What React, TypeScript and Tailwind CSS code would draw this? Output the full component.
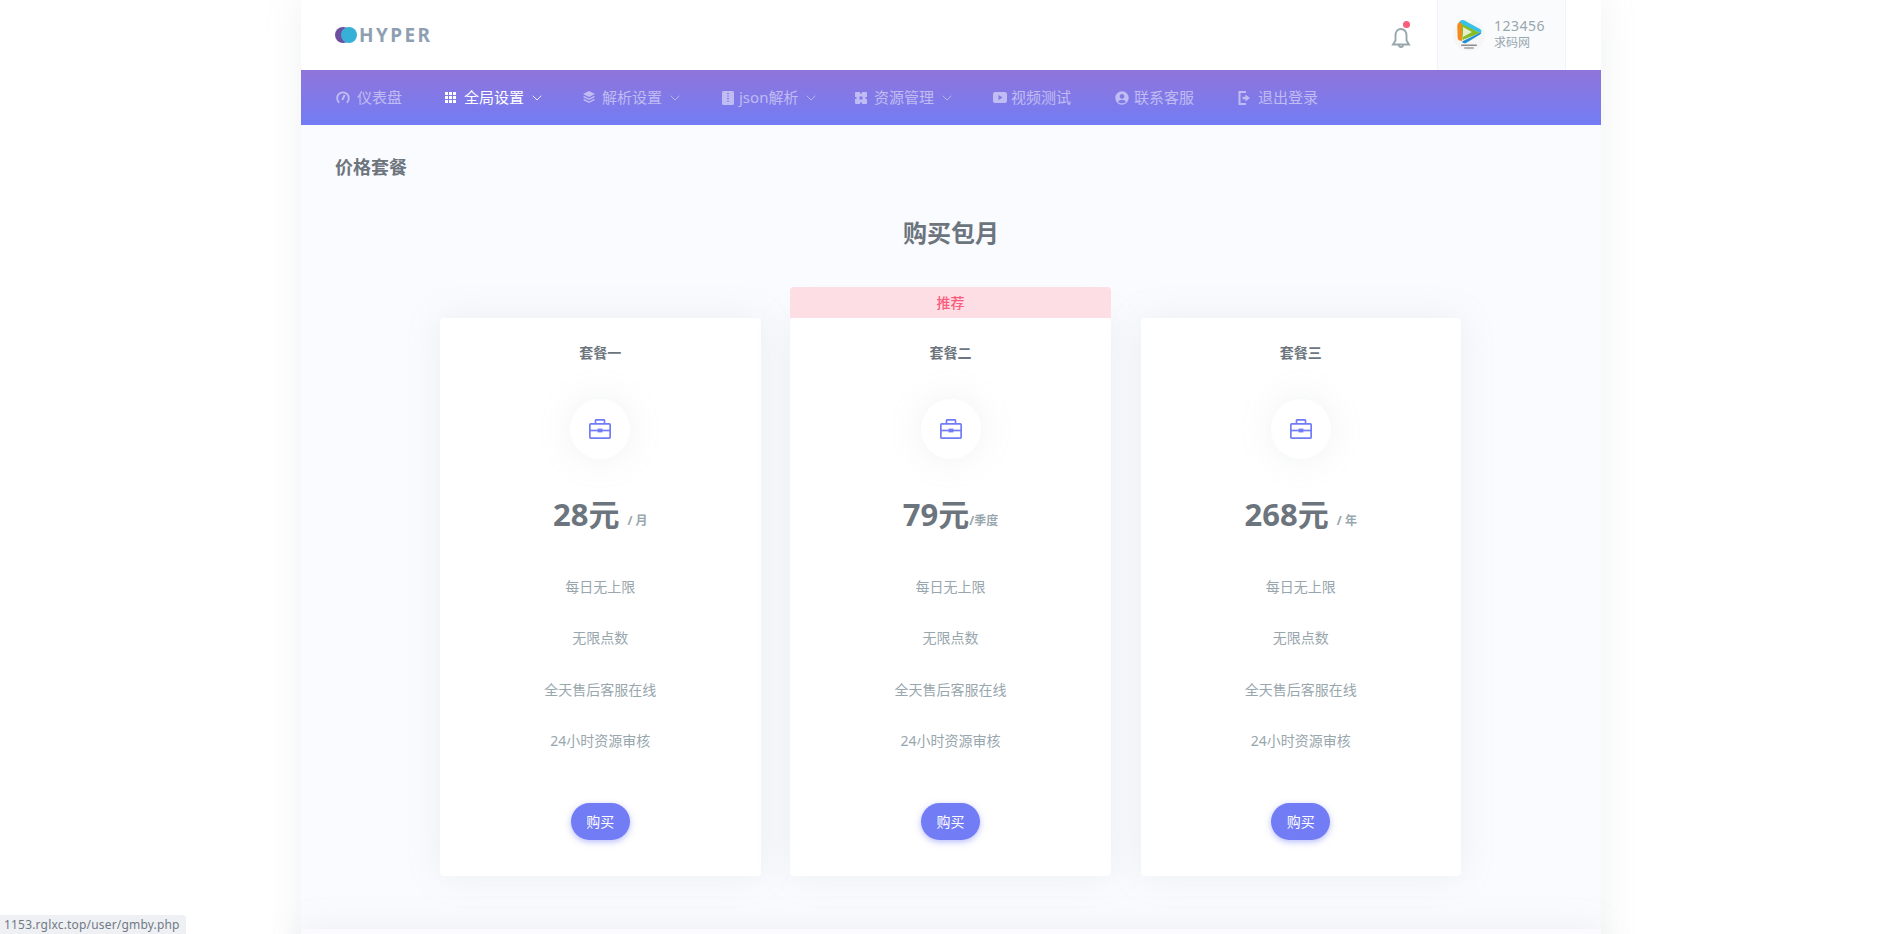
import { ChevronDown } from 'lucide-react';
import type { ReactNode } from 'react';
import { MdAccountCircle } from 'react-icons/md';

interface NavItem {
  label: string;
  icon: ReactNode;
  width: string;
  caret?: boolean;
  active?: boolean;
}

function GaugeIcon() {
  return (
    <svg width="14" height="14" viewBox="0 0 24 24" fill="none" stroke="currentColor" className="ml-[1px]">
      <path d="M5.5 20a10 10 0 1 1 13 0" strokeWidth="3.2" />
      <path d="M10.5 15.5L15 7" strokeWidth="3.4" />
    </svg>
  );
}

function GridIcon() {
  return (
    <svg width="11" height="11" viewBox="0 0 11 11" fill="currentColor" className="ml-[3px]">
      {[0, 4, 8].flatMap((y) => [0, 4, 8].map((x) => <rect key={`${x}-${y}`} x={x} y={y} width="3" height="3" />))}
    </svg>
  );
}

function LayersIcon() {
  return (
    <svg width="12" height="13" viewBox="0 0 12 13" fill="currentColor" className="ml-[3px]">
      <path d="M6 0l6 3-6 3-6-3z" />
      <path d="M1.2 5L6 7.4 10.8 5 12 6 6 9 0 6z" />
      <path d="M1.2 8L6 10.4 10.8 8 12 9 6 12 0 9z" />
    </svg>
  );
}

function ZipIcon() {
  return (
    <svg width="12" height="14" viewBox="0 0 12 14" className="ml-[5px]">
      <rect width="12" height="14" rx="1.5" fill="currentColor" />
      <path d="M5 2h2v1H5zM5 4.500h2v1H5zM5 7h2v1H5zM5 9.500h2v1H5z" fill="#7f78e4" />
    </svg>
  );
}

function PuzzleIcon() {
  return (
    <svg width="12" height="12" viewBox="0 0 12 12" fill="currentColor" className="ml-[3px]">
      <path
        fillRule="evenodd"
        d="M1 0h4v1.500h2V0h4a1 1 0 0 1 1 1v4h-1.500v2H12v4a1 1 0 0 1-1 1H7v-1.500H5V12H1a1 1 0 0 1-1-1V7h1.500V5H0V1a1 1 0 0 1 1-1zM4.500 4.500v3h3v-3z"
      />
    </svg>
  );
}

function VideoIcon() {
  return (
    <svg width="14" height="11" viewBox="0 0 14 11" fill="currentColor" className="ml-[4px]">
      <path fillRule="evenodd" d="M2 0h10a2 2 0 0 1 2 2v7a2 2 0 0 1-2 2H2a2 2 0 0 1-2-2V2a2 2 0 0 1 2-2zM5.500 3v5l4-2.500z" />
    </svg>
  );
}

function LogoutIcon() {
  return (
    <svg width="12" height="14" viewBox="0 0 12 14" className="ml-[2px]">
      <path d="M8 1H1.500v12H8" fill="none" stroke="currentColor" strokeWidth="2" />
      <path d="M4.500 5.800h3V3.500L12 7l-4.500 3.500V8.200h-3z" fill="currentColor" />
    </svg>
  );
}

const navItems: NavItem[] = [
  { label: '仪表盘', icon: <GaugeIcon />, width: 'w-[107px]' },
  { label: '全局设置', icon: <GridIcon />, width: 'w-[138px]', caret: true, active: true },
  { label: '解析设置', icon: <LayersIcon />, width: 'w-[137px]', caret: true },
  { label: 'json解析', icon: <ZipIcon />, width: 'w-[135px]', caret: true },
  { label: '资源管理', icon: <PuzzleIcon />, width: 'w-[137px]', caret: true },
  { label: '视频测试', icon: <VideoIcon />, width: 'w-[123px]' },
  { label: '联系客服', icon: <MdAccountCircle size={16} className="ml-[2px]" />, width: 'w-[124px]' },
  { label: '退出登录', icon: <LogoutIcon />, width: 'w-[90px]' },
];

const features = ['每日无上限', '无限点数', '全天售后客服在线', '24小时资源审核'];

const plans = [
  { name: '套餐一', price: '28元', unit: '/ 月' },
  { name: '套餐二', price: '79元', unit: '/季度', recommended: true },
  { name: '套餐三', price: '268元', unit: '/ 年' },
];

function Briefcase() {
  return (
    <svg width="22" height="20" viewBox="0 0 22 20" fill="none" stroke="#727cf5" strokeWidth="1.7">
      <rect x="0.850" y="4.850" width="20.300" height="14.300" rx="0.800" />
      <path d="M6.500 4.500V1.500a0.700 0.700 0 0 1 .7-.7h7.600a0.700 0.700 0 0 1 .7.7v3" />
      <path d="M1 11.500h20" />
      <rect x="9" y="10" width="4" height="3" fill="#727cf5" strokeWidth="0.800" />
    </svg>
  );
}

function Logo() {
  return (
    <div className="flex items-center gap-[2px]">
      <svg width="22" height="16" viewBox="0 0 22 16">
        <circle cx="8" cy="8" r="8" fill="#6e4f9f" />
        <circle cx="14" cy="8" r="8" fill="#36b0d6" />
      </svg>
      <span className="text-[19px] font-bold leading-none tracking-[2.400px] text-[#8f9fb2]">HYPER</span>
    </div>
  );
}

function Avatar() {
  return (
    <svg width="32" height="32" viewBox="0 0 32 32">
      <circle cx="16" cy="16" r="16" fill="#f6f6f6" />
      <path d="M6 3.500Q7 0 11 1.200L27 10Q30 12 27 14L22 12 8 5z" fill="#36c0ea" />
      <path d="M4.300 7Q4.500 3.500 7 3.200L9 5V22Q5 22 4.700 19z" fill="#f28a1c" />
      <path d="M8.500 4.800L23 12 27 14 9.500 21z" fill="#86bd24" />
      <path d="M9 22.500L27.500 13.500Q29.500 13 27 15.500L13 24Q10 25 9 22.500z" fill="#1f8fd8" />
      <path d="M10 8l9 5-9 5z" fill="#e6edd0" />
      <rect x="8" y="25.500" width="16" height="1.500" rx="0.700" fill="#8c8c8c" />
      <rect x="11" y="28" width="10" height="2" rx="1" fill="#b5b5b5" />
    </svg>
  );
}

function PlanCard({ name, price, unit, recommended }: { name: string; price: string; unit: string; recommended?: boolean }) {
  return (
    <div className="relative flex h-[558px] w-[320.5px] flex-col items-center rounded-[4px] bg-white shadow-[0_0_35px_0_rgba(154,161,171,0.15)]">
      {recommended && (
        <div className="absolute -top-[31px] left-0 right-0 flex h-[31px] items-center justify-center rounded-t-[4px] bg-[#fedee5] pb-[1px] text-[14px] font-medium text-[#fa5c7c]">
          推荐
        </div>
      )}
      <p className="mt-[24px] text-[14px] font-bold leading-[21px] text-[#6c757d]">{name}</p>
      <div className="mt-[36px] flex h-[60px] w-[60px] items-center justify-center rounded-full bg-white shadow-[0_0_35px_0_rgba(154,161,171,0.15)]">
        <Briefcase />
      </div>
      <div className="mt-[33px] flex h-[45px] items-center text-[#6c757d]">
        <span className="text-[31px] font-bold leading-[45px]">{price}</span>
        <span className={`mt-[13px] text-[12px] font-bold text-[#98a6ad] ${recommended ? '' : 'ml-[8px]'}`}>{unit}</span>
      </div>
      <ul className="mt-[24px] flex flex-col items-center">
        {features.map((f) => (
          <li key={f} className="h-[51.3px] text-[14px] leading-[51.3px] text-[#98a6ad]">
            {f}
          </li>
        ))}
      </ul>
      <button type="button" className="mt-[37px] h-[37px] w-[59px] rounded-full bg-[#727cf5] text-[14px] text-white shadow-[0_2px_6px_0_rgba(114,124,245,0.5)]">
        购买
      </button>
    </div>
  );
}

export default function App() {
  return (
    <div className="relative h-[934px] overflow-hidden bg-white font-['Noto_Sans','Noto_Sans_CJK_SC',sans-serif]">
      <div className="ml-[301px] w-[1300px] bg-[#fafbfe] shadow-[0_0_35px_0_rgba(154,161,171,0.15)]">
        <header className="flex h-[70px] items-center justify-between bg-white pl-[34px] pr-[35px]">
          <Logo />
          <div className="flex h-full items-center">
            <div className="relative mr-[26px] mt-[6px]">
              <svg width="20" height="21" viewBox="0 0 20 21" fill="none" stroke="#98a6ad" strokeWidth="1.900" className="block">
                <path d="M10 1C6.500 1 4.500 4 4.500 7.500v5L2 16.500h16l-2.500-4v-5C15.500 4 13.500 1 10 1z" />
                <path d="M8 17a2 2 0 0 0 4 0" />
              </svg>
              <span className="absolute -top-[6.500px] left-[12px] h-[7px] w-[7px] rounded-full bg-[#fa5c7c]" />
            </div>
            <div className="flex h-full w-[129px] items-center border-x border-[#f1f3fa] bg-[#fafbfd] pl-[15px]">
              <Avatar />
              <div className="ml-[9px]">
                <p className="-mt-[2px] mb-[1px] text-[14px] leading-[17px] tracking-[0.5px] text-[#98a6ad]">123456</p>
                <p className="text-[12px] leading-[16px] text-[#98a6ad]">求码网</p>
              </div>
            </div>
          </div>
        </header>
        <nav className="flex h-[55px] items-center bg-gradient-to-b from-[#8f75da] to-[#727cf5] pl-[34px]">
          {navItems.map((item) => (
            <a key={item.label} href="#" className={`flex items-center text-[15px] ${item.width} ${item.active ? 'text-white' : 'text-white/50'}`}>
              <span className="flex w-[22px] shrink-0 justify-start">{item.icon}</span>
              {item.label}
              {item.caret && <ChevronDown size={16} strokeWidth={1.300} className="ml-[5px]" />}
            </a>
          ))}
        </nav>
        <main className="h-[804px] px-[34px]">
          <h4 className="pt-[26px] text-[18px] font-bold leading-[32px] text-[#6c757d]">价格套餐</h4>
          <h2 className="mt-[32px] text-center text-[24px] font-bold leading-[36px] text-[#6c757d]">购买包月</h2>
          <div className="ml-[105px] mt-[67px] flex gap-[29.750px]">
            {plans.map((p) => (
              <PlanCard key={p.name} {...p} />
            ))}
          </div>
        </main>
        <footer className="h-[40px] bg-[#fbfbfe] shadow-[0_0_35px_0_rgba(154,161,171,0.15)]" />
      </div>
      <div className="absolute bottom-0 left-0 flex h-[19px] w-[186px] items-center rounded-tr-[4px] bg-[#eff0f3] pl-[4px] text-[12px] tracking-[0.18px] text-[#6f7a86]">
        1153.rglxc.top/user/gmby.php
      </div>
    </div>
  );
}
